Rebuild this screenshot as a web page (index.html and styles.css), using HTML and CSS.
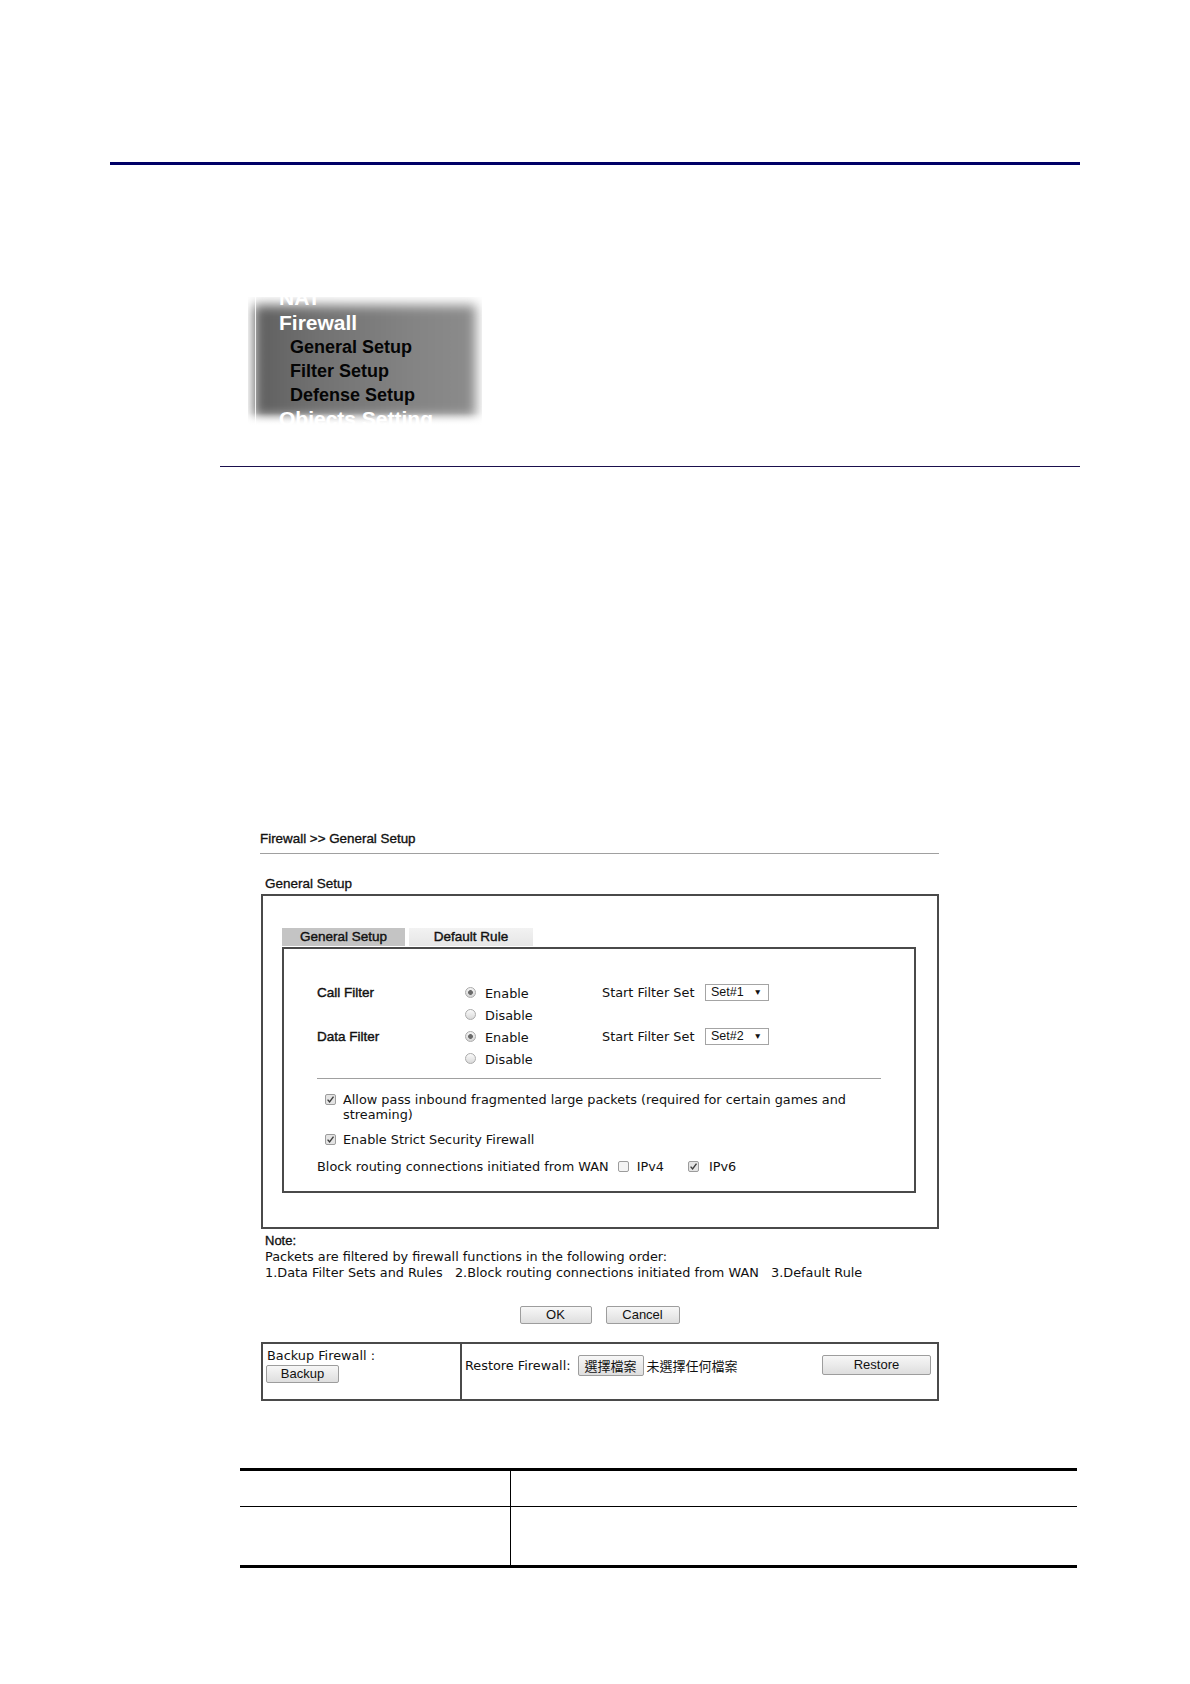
FILE: index.html
```html
<!DOCTYPE html>
<html lang="en">
<head>
<meta charset="utf-8">
<title>Firewall General Setup</title>
<link rel="stylesheet" href="styles.css">
</head>
<body>
<div class="page">
  <div class="top-rule"></div>

  <div class="menu-shot">
    <div class="menu-bg"></div>
    <div class="menu-edge"></div>
    <ul class="menu-list">
      <li class="m-top">NAT</li>
      <li class="m-top">Firewall</li>
      <li class="m-sub">General Setup</li>
      <li class="m-sub">Filter Setup</li>
      <li class="m-sub">Defense Setup</li>
      <li class="m-top">Objects Setting</li>
    </ul>
    <div class="menu-fade"></div>
  </div>

  <div class="thin-rule"></div>

  <div class="ui">
    <div class="ui-title">Firewall &gt;&gt; General Setup</div>
    <div class="ui-sect">General Setup</div>
    <div class="outer-box">
      <div class="tabs">
        <div class="tab tab-active">General Setup</div>
        <div class="tab">Default Rule</div>
      </div>
      <div class="inner-box">
        <div class="filter-grid">
          <div class="lbl">Call Filter</div>
          <div class="opt"><span class="radio on"></span><span>Enable</span></div>
          <div class="sfs">Start Filter Set</div>
          <div class="select"><span>Set#1</span><span class="arrow">&#9660;</span></div>

          <div></div>
          <div class="opt"><span class="radio"></span><span>Disable</span></div>
          <div></div>
          <div></div>

          <div class="lbl">Data Filter</div>
          <div class="opt"><span class="radio on"></span><span>Enable</span></div>
          <div class="sfs">Start Filter Set</div>
          <div class="select"><span>Set#2</span><span class="arrow">&#9660;</span></div>

          <div></div>
          <div class="opt"><span class="radio"></span><span>Disable</span></div>
          <div></div>
          <div></div>
        </div>
        <div class="sep"></div>
        <div class="chk chk-first">
          <svg class="cb" width="11" height="11" viewBox="0 0 11 11"><rect x="0.5" y="0.5" width="10" height="10" rx="1.5" fill="#e4e4e4" stroke="#9c9c9c"/><path d="M2.6 5.6 L4.6 7.9 L8.5 2.7" fill="none" stroke="#3c3c3c" stroke-width="1.4"/></svg>
          <span class="chk-text">Allow pass inbound fragmented large packets (required for certain games and streaming)</span>
        </div>
        <div class="chk chk-second">
          <svg class="cb" width="11" height="11" viewBox="0 0 11 11"><rect x="0.5" y="0.5" width="10" height="10" rx="1.5" fill="#e4e4e4" stroke="#9c9c9c"/><path d="M2.6 5.6 L4.6 7.9 L8.5 2.7" fill="none" stroke="#3c3c3c" stroke-width="1.4"/></svg>
          <span class="chk-text">Enable Strict Security Firewall</span>
        </div>
        <div class="block-row">
          <span>Block routing connections initiated from WAN</span>
          <svg class="cb cb-v4" width="11" height="11" viewBox="0 0 11 11"><rect x="0.5" y="0.5" width="10" height="10" rx="1.5" fill="#f4f4f4" stroke="#9c9c9c"/></svg>
          <span class="ipv">IPv4</span>
          <svg class="cb cb-v6" width="11" height="11" viewBox="0 0 11 11"><rect x="0.5" y="0.5" width="10" height="10" rx="1.5" fill="#e4e4e4" stroke="#9c9c9c"/><path d="M2.6 5.6 L4.6 7.9 L8.5 2.7" fill="none" stroke="#3c3c3c" stroke-width="1.4"/></svg>
          <span class="ipv">IPv6</span>
        </div>
      </div>
    </div>

    <div class="note">
      <div class="note-head">Note:</div>
      <div>Packets are filtered by firewall functions in the following order:</div>
      <div>1.Data Filter Sets and Rules&nbsp;&nbsp; 2.Block routing connections initiated from WAN&nbsp;&nbsp; 3.Default Rule</div>
    </div>

    <div class="btn-row">
      <button class="btn btn-ok">OK</button>
      <button class="btn btn-cancel">Cancel</button>
    </div>

    <div class="backup-box">
      <div class="bk-left">
        <div class="bk-label">Backup Firewall :</div>
        <button class="btn btn-backup">Backup</button>
      </div>
      <div class="bk-right">
        <span class="rs-label">Restore Firewall:</span>
        <button class="btn btn-file">選擇檔案</button>
        <span class="no-file">未選擇任何檔案</span>
        <button class="btn btn-restore">Restore</button>
      </div>
    </div>
  </div>

  <table class="doc-table">
    <tr class="r1"><td class="c1"></td><td class="c2"></td></tr>
    <tr class="r2"><td class="c1"></td><td class="c2"></td></tr>
  </table>
</div>
</body>
</html>
```

FILE: styles.css
```css
html, body {
  margin: 0;
  padding: 0;
  background: #ffffff;
}
body {
  font-family: "DejaVu Sans", Verdana, sans-serif;
  font-size: 12.85px;
  color: #111;
}
.page {
  width: 1190px;
  min-height: 1684px;
  overflow: hidden;
}

/* rules */
.top-rule {
  margin: 162px 110px 0 110px;
  height: 3px;
  background: #000066;
}
.thin-rule {
  margin: 41px 110px 0 220px;
  height: 1px;
  background: #1a0f4d;
}

/* menu picture */
.menu-shot {
  margin: 132px 0 0 248px;
  width: 234px;
  height: 128px;
  position: relative;
  overflow: hidden;
  font-family: "Liberation Sans", Arial, sans-serif;
  font-weight: bold;
}
.menu-bg {
  position: absolute;
  left: 6px;
  top: 8px;
  width: 222px;
  height: 112px;
  background: linear-gradient(90deg, #5f5f5f 0%, #727272 30%, #838383 70%, #8c8c8c 100%);
  filter: blur(6px);
}
.menu-edge {
  position: absolute;
  left: 7px;
  top: 0;
  width: 1px;
  height: 128px;
  background: rgba(255,255,255,0.85);
}
.menu-fade {
  position: absolute;
  left: 0;
  bottom: 0;
  width: 234px;
  height: 12px;
  background: linear-gradient(rgba(255,255,255,0), #ffffff);
}
.menu-list {
  position: relative;
  list-style: none;
  margin: -11px 0 0 0;
  padding: 0;
}
.m-top {
  font-size: 21px;
  line-height: 24.5px;
  color: #ffffff;
  padding-left: 31px;
}
.m-sub {
  font-size: 18px;
  line-height: 24px;
  color: #050505;
  padding-left: 42px;
}

/* UI screenshot */
.ui {
  margin: 364px 0 0 260px;
  width: 679px;
}
.ui-title {
  font-family: "Liberation Sans", Arial, sans-serif;
  font-size: 13.4px;
  line-height: 16px;
  padding-bottom: 6px;
  border-bottom: 1px solid #a0a0a0;
  -webkit-text-stroke: 0.35px #111;
}
.ui-sect {
  font-family: "Liberation Sans", Arial, sans-serif;
  font-size: 13.5px;
  line-height: 16px;
  margin-top: 22px;
  margin-bottom: 2px;
  padding-left: 5px;
  -webkit-text-stroke: 0.3px #111;
}
.outer-box {
  box-sizing: border-box;
  margin-left: 1px;
  width: 678px;
  border: 2px solid #4a4a4a;
  padding: 32px 21px 34px 19px;
}
.tabs {
  display: flex;
  gap: 4px;
  height: 19px;
}
.tab {
  width: 124px;
  height: 18px;
  background: linear-gradient(#f2f2f2, #e6e6e6);
  text-align: center;
  font-family: "Liberation Sans", Arial, sans-serif;
  font-size: 13.5px;
  line-height: 18px;
  -webkit-text-stroke: 0.4px #111;
}
.tab-active {
  width: 123px;
  background: #c4c4c4;
}
.inner-box {
  border: 2px solid #4a4a4a;
  padding: 32px 33px 17px 33px;
}
.filter-grid {
  display: grid;
  grid-template-columns: 148px 137px 103px auto;
  grid-auto-rows: 22px;
  align-items: center;
}
.lbl {
  font-family: "Liberation Sans", Arial, sans-serif;
  font-size: 13.5px;
  -webkit-text-stroke: 0.4px #111;
}
.opt {
  display: flex;
  align-items: center;
  gap: 9px;
}
.opt span:last-child {
  padding-top: 3px;
}
.radio {
  box-sizing: border-box;
  width: 11px;
  height: 11px;
  border-radius: 50%;
  border: 1px solid #ababab;
  background: linear-gradient(#fafafa, #d9d9d9);
}
.radio.on {
  background: radial-gradient(circle, #6a6a6a 0, #6a6a6a 2px, rgba(0,0,0,0) 2.8px), linear-gradient(#f4f4f4, #d4d4d4);
}
.sfs {
  white-space: nowrap;
}
.select {
  box-sizing: border-box;
  width: 64px;
  height: 17px;
  border: 1px solid #a4a4a4;
  background: #fff;
  display: flex;
  align-items: center;
  justify-content: space-between;
  padding: 0 6px 0 5px;
  font-family: "Liberation Sans", Arial, sans-serif;
  font-size: 12.5px;
}
.arrow {
  font-size: 8.5px;
  line-height: 10px;
}
.sep {
  margin-top: 9px;
  height: 1px;
  background: #a0a0a0;
}
.chk {
  display: flex;
  align-items: flex-start;
  gap: 7px;
  padding-left: 8px;
  line-height: 15px;
}
.chk .cb {
  flex: none;
  margin-top: 2px;
}
.chk-first {
  margin-top: 13px;
}
.chk-second {
  margin-top: 10px;
}
.chk-text {
  max-width: 530px;
}
.block-row {
  margin-top: 12px;
  line-height: 15px;
  display: flex;
  align-items: center;
}
.cb-v4 {
  margin-left: 9px;
  margin-right: 8px;
}
.cb-v6 {
  margin-left: 24px;
  margin-right: 10px;
}

.note {
  margin-top: 4px;
  padding-left: 5px;
  line-height: 16px;
}
.note-head {
  font-family: "Liberation Sans", Arial, sans-serif;
  font-size: 13px;
  -webkit-text-stroke: 0.35px #111;
}

.btn {
  box-sizing: border-box;
  margin: 0;
  padding: 0;
  height: 18px;
  border: 1px solid #9d9d9d;
  border-radius: 2px;
  background: linear-gradient(#f7f7f7, #dedede);
  font-family: "Liberation Sans", Arial, sans-serif;
  font-size: 13px;
  line-height: 16px;
  color: #111;
}
.btn-row {
  margin-top: 25px;
  display: flex;
  justify-content: center;
  gap: 14px;
}
.btn-ok { width: 72px; }
.btn-cancel { width: 74px; }

.backup-box {
  box-sizing: border-box;
  margin: 18px 0 0 1px;
  width: 678px;
  height: 59px;
  border: 2px solid #4a4a4a;
  display: grid;
  grid-template-columns: 197px 1fr;
}
.bk-left {
  padding: 4px 0 0 3px;
}
.bk-label {
  line-height: 16px;
  padding-left: 1px;
}
.btn-backup {
  margin-top: 1px;
  width: 73px;
}
.bk-right {
  border-left: 2px solid #4a4a4a;
  display: flex;
  align-items: flex-start;
  padding: 11px 6px 0 3px;
}
.rs-label {
  line-height: 21px;
}
.btn-file {
  margin-left: 7px;
  width: 66px;
  height: 21px;
  font-family: "Noto Sans CJK TC", "Noto Sans CJK SC", sans-serif;
  font-size: 13px;
  line-height: 19px;
}
.no-file {
  margin-left: 3px;
  line-height: 21px;
  font-family: "Noto Sans CJK TC", "Noto Sans CJK SC", sans-serif;
  font-size: 13px;
}
.btn-restore {
  margin-left: auto;
  width: 109px;
  height: 20px;
}

/* bottom table */
.doc-table {
  margin: 67px 0 0 240px;
  width: 837px;
  border-collapse: collapse;
  border-top: 3px solid #000;
  border-bottom: 3px solid #000;
}
.doc-table td {
  padding: 0;
}
.doc-table .c1 {
  width: 270px;
  border-right: 1px solid #000;
}
.doc-table .r1 td {
  height: 35px;
  border-bottom: 1px solid #000;
}
.doc-table .r2 td {
  height: 58px;
}
```
